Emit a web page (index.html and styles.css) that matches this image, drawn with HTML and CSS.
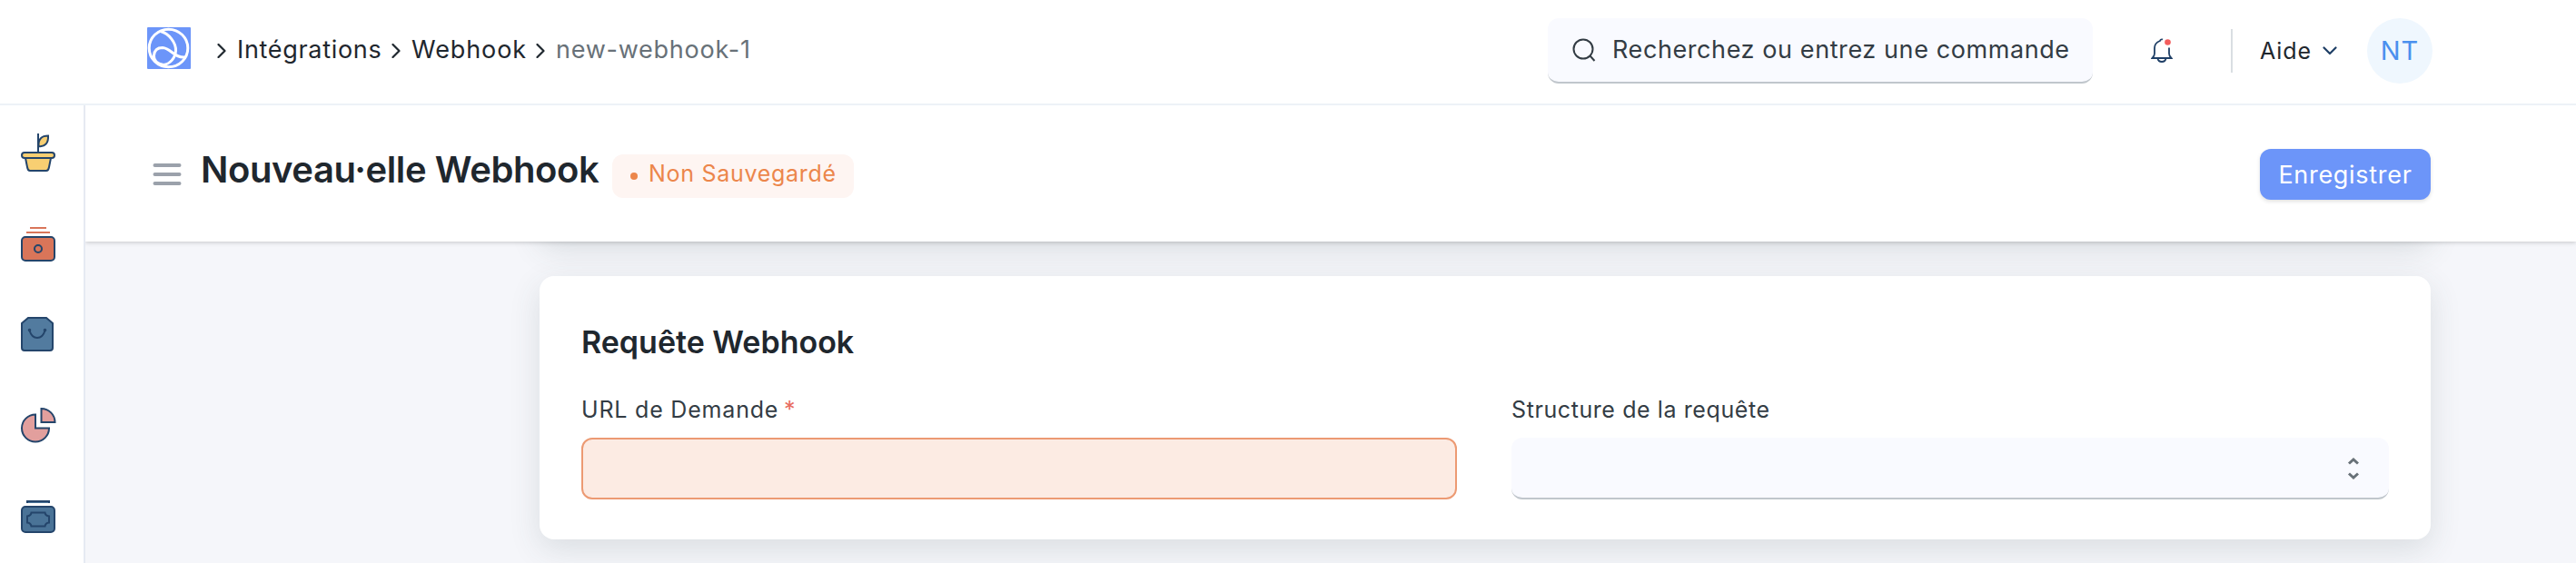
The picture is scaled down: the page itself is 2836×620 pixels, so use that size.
FILE: index.html
```
<!DOCTYPE html>
<html lang="fr">
<head>
<meta charset="utf-8">
<title>Webhook</title>
<link rel="stylesheet" href="styles.css">
</head>
<body>
<header class="navbar">
  <nav class="crumbs">
    <svg class="logo" width="48" height="46" viewBox="0 0 48 46"><rect width="48" height="46" rx="1" fill="#6c95f9"/><g fill="none" stroke="#fff" stroke-width="3"><ellipse cx="23.5" cy="23" rx="21.3" ry="20.8"/><path d="M15 4.500C24 7 32 17 31.500 26C31 34 25 40.500 18 41.500C11 40 7 36 7.500 31C8 25 12 22.500 17 22.500C26 23 30 34 41.500 33"/></g></svg>
    <svg class="sep sep-first" width="10" height="16" viewBox="0 0 10 16"><path d="M1.500 1L8.500 8L1.500 15"/></svg>
    <a class="crumb crumb-module">Intégrations</a>
    <svg class="sep" width="10" height="16" viewBox="0 0 10 16"><path d="M1.500 1L8.500 8L1.500 15"/></svg>
    <a class="crumb crumb-doctype">Webhook</a>
    <svg class="sep" width="10" height="16" viewBox="0 0 10 16"><path d="M1.500 1L8.500 8L1.500 15"/></svg>
    <span class="crumb crumb-current">new-webhook-1</span>
  </nav>
  <div class="tools">
    <div class="search">
      <svg width="26" height="26" viewBox="0 0 26 26" fill="none" stroke="#333c44" stroke-width="2"><circle cx="12" cy="12" r="10.500"/><path d="M19.500 19.500L24.500 25"/></svg>
      <span class="search-text">Recherchez ou entrez une commande</span>
    </div>
    <svg class="bell" width="24" height="28" viewBox="0 0 24 28" fill="none" stroke="#1f3f66" stroke-width="1.800"><path d="M13 1.500C12 1 10.500 1.500 10 3C6 4.500 4 7.500 4 11V17C4 19 3 20.500 1.500 22H22.500C21 20.500 20 19 20 17V10.500M7.500 22.500C8 25 9.500 26 12 26S16 25 16.500 22.500"/><circle cx="18.500" cy="4.500" r="3.300" fill="#f25c5c" stroke="none"/></svg>
    <div class="divider"></div>
    <div class="help"><span class="help-text">Aide</span><svg width="16" height="10" viewBox="0 0 16 10" fill="none" stroke="#1f3f66" stroke-width="2.200" stroke-linecap="round" stroke-linejoin="round"><path d="M1.500 1.500L8 8L14.500 1.500"/></svg></div>
    <div class="avatar">NT</div>
  </div>
</header>
<div class="body">
  <aside class="rail">
    <svg width="40" height="44" viewBox="0 0 40 44"><path d="M20 21V1M20.500 15C20 7 24 3.500 31 3.500C31.500 11 28 16 20.500 15Z"/><path d="M6 28L8 38C8.500 41 9.500 42 11 42H29C31 42 31.500 41 32 38L34 28"/><rect x="2" y="22" width="36" height="6" rx="3"/></svg>
    <svg class="accounts" width="40" height="44" viewBox="0 0 40 44"><path class="slip" d="M11 5H29M7 10H33"/><rect x="2" y="15" width="36" height="26" rx="4"/><circle cx="20" cy="28" r="4"/></svg>
    <svg class="buying" width="40" height="44" viewBox="0 0 40 44"><path d="M2 10L9 4H29L36 10V37Q36 40 33 40H5Q2 40 2 37Z"/><path d="M10.500 18C12 23 14 26 19 26S26 23 27.500 18"/><circle cx="10.500" cy="17.500" r=".8"/><circle cx="27.500" cy="17.500" r=".8"/></svg>
    <svg class="reports" width="40" height="44" viewBox="0 0 40 44"><path d="M17 10.500V25.500H32A15 15 0 1 1 17 10.500Z"/><path d="M23.500 4V19H38.500A15 15 0 0 0 23.500 4Z"/></svg>
    <svg class="payroll" width="40" height="44" viewBox="0 0 40 44"><path d="M8 8V6H32V8"/><rect x="2" y="12" width="36" height="28" rx="4"/><path d="M12.500 18.500H27.500Q28 22 32 22.500V29.500Q28 30 27.500 33.500H12.500Q12 30 8 29.500V22.500Q12 22 12.500 18.500Z"/></svg>
  </aside>
  <main class="page">
    <div class="page-head">
      <svg class="menu" width="32" height="24" viewBox="0 0 32 24"><path d="M2.500 2H29.500M2.500 12H29.500M2.500 22H29.500"/></svg>
      <h1>Nouveau·elle Webhook</h1>
      <div class="badge"><i class="dot"></i><span class="badge-text">Non Sauvegardé</span></div>
      <button class="save">Enregistrer</button>
    </div>
    <div class="content">
      <section class="card card-previous"></section>
      <section class="card">
        <h2>Requête Webhook</h2>
        <div class="fields">
          <div class="field">
            <label class="label-url">URL de Demande <b class="required">*</b></label>
            <div class="input input-missing"></div>
          </div>
          <div class="field">
            <label class="label-structure">Structure de la requête</label>
            <div class="input"><svg width="14" height="26" viewBox="0 0 14 26"><path d="M2 7.500L7 3L12 7.500M2 18.500L7 23L12 18.500"/></svg></div>
          </div>
        </div>
      </section>
    </div>
  </main>
</div>
</body>
</html>
```

FILE: styles.css
```
* { box-sizing: border-box; }
body {
  margin: 0;
  width: 2836px;
  height: 620px;
  overflow: hidden;
  background: #fff;
  color: #1f272e;
  font-family: Inter, "Noto Sans", sans-serif;
  font-size: 27px;
  white-space: nowrap;
}
svg { display: block; flex: none; }

.navbar {
  display: flex;
  justify-content: space-between;
  align-items: flex-start;
  height: 116px;
  padding: 20px 158px 0 162px;
  border-bottom: 2px solid #edf2f7;
}
.crumbs, .tools { display: flex; align-items: center; height: 72px; }
.logo { margin-bottom: 6px; }
.sep { fill: none; stroke: #1f272e; stroke-width: 2.2; stroke-linecap: round; stroke-linejoin: round; }
.sep-first { margin-left: 29px; }
.crumb { padding-bottom: 3px; margin-left: 12px; }
.crumb-module { width: 170px; letter-spacing: .68px; }
.crumb-doctype { width: 137px; letter-spacing: .9px; }
.crumb-current { letter-spacing: .75px; color: #687178; }

.search {
  display: flex;
  align-items: center;
  width: 600px;
  height: 72px;
  padding-left: 27px;
  border-bottom: 2px solid #c0c6cc;
  border-radius: 12px;
  background: #f9faff;
  color: #333c44;
}
.search-text { margin-left: 18px; padding-bottom: 1px; letter-spacing: .59px; }
.bell { margin-left: 64px; }
.divider { width: 2px; height: 48px; margin-left: 64px; background: #d9dee2; }
.help { display: flex; align-items: center; width: 118px; margin-left: 30px; }
.help-text { width: 69px; padding-bottom: 1px; font-size: 25px; letter-spacing: .9px; }
.avatar {
  width: 72px;
  height: 72px;
  border-radius: 50%;
  background: #eff7fe;
  color: #4a90ee;
  font-size: 29px;
  line-height: 72px;
  text-align: center;
  letter-spacing: 1px;
}

.body { display: flex; height: 504px; }
.rail {
  display: flex;
  flex-direction: column;
  gap: 56px;
  width: 94px;
  padding: 30px 0 0 22px;
  border-right: 2px solid #e6eaf2;
  overflow: hidden;
}
.rail svg { fill: #f8cf72; stroke: #24456b; stroke-width: 2; }
.rail .accounts { fill: #d97559; }
.rail .slip { stroke: #d97559; }
.rail .buying { fill: #527b9f; }
.rail .reports { fill: #e29f9d; }
.rail .payroll { fill: #4a7397; }

.page { display: flex; flex-direction: column; flex: 1; overflow: hidden; }
.page-head {
  display: flex;
  align-items: center;
  position: relative;
  height: 150px;
  padding: 2px 160px 0 74px;
  background: #fff;
  box-shadow: 0 1px 5px rgba(0, 0, 0, .2);
}
.menu { fill: none; stroke: #9ba1ab; stroke-width: 4; stroke-linecap: round; }
h1 { width: 453px; margin: 0 0 11px 21px; font-size: 40px; font-weight: 600; letter-spacing: -.4px; line-height: 48px; }
.badge {
  display: flex;
  align-items: center;
  width: 266px;
  height: 48px;
  margin-top: 4px;
  padding-left: 20px;
  border-radius: 12px;
  background: #fef5f2;
  color: #ec864b;
  font-size: 25px;
}
.dot { width: 8px; height: 8px; border-radius: 50%; background: currentColor; }
.badge-text { margin-left: 12px; padding-bottom: 6px; letter-spacing: .7px; }
.save {
  width: 188px;
  height: 56px;
  margin-left: auto;
  padding: 0;
  border: 0;
  border-radius: 12px;
  background: #6c95f9;
  box-shadow: 0 2px 4px rgba(0, 0, 0, .12);
  color: #fff;
  font: inherit;
  letter-spacing: .7px;
}

.content {
  display: flex;
  flex-direction: column;
  justify-content: flex-end;
  flex: 1;
  gap: 40px;
  padding: 0 160px 26px 500px;
  overflow: hidden;
  background: #f5f6fa;
}
.card {
  flex: none;
  height: 290px;
  padding: 47px 46px 0;
  border-radius: 16px;
  background: #fff;
  box-shadow: 0 11px 34px rgba(60, 80, 80, .14);
}
h2 { margin: 0 0 34px; font-size: 34px; font-weight: 600; line-height: 52px; }
.fields { display: grid; grid-template-columns: 964px 966px; column-gap: 60px; }
label { display: block; height: 45px; color: #333c44; font-size: 25px; line-height: 28px; }
.label-url { letter-spacing: .8px; }
.label-structure { letter-spacing: .59px; }
.required { margin-left: -2px; color: #e86c61; font-size: 25px; font-weight: 400; line-height: 20px; }
.input {
  display: flex;
  align-items: center;
  justify-content: flex-end;
  height: 68px;
  padding: 2px 32px 0 0;
  border-bottom: 2px solid #c0c6cc;
  border-radius: 12px;
  background: #f9faff;
}
.input svg { fill: none; stroke: #687178; stroke-width: 3; }
.input-missing { border: 2px solid #ec9a73; background: #fcebe3; }
```
